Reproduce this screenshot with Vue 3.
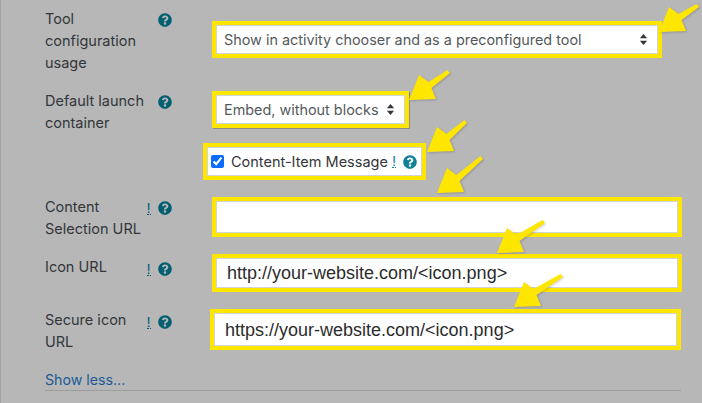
<script setup>
const help = 'M504 256c0 136.997-111.043 248-248 248S8 392.997 8 256C8 119.083 119.043 8 256 8s248 111.083 248 248zM262.655 90c-54.497 0-89.255 22.957-116.549 63.758-3.536 5.286-2.353 12.415 2.715 16.258l34.699 26.31c5.205 3.947 12.621 3.008 16.665-2.122 17.864-22.658 30.113-35.797 57.303-35.797 20.429 0 45.698 13.148 45.698 32.958 0 14.976-12.363 22.667-32.534 33.976C247.128 238.528 216 254.941 216 296v4c0 6.627 5.373 12 12 12h56c6.627 0 12-5.373 12-12v-1.333c0-28.462 83.186-29.647 83.186-106.667 0-58.002-60.165-102-116.531-102zM256 338c-25.365 0-46 20.635-46 46 0 25.364 20.635 46 46 46s46-20.636 46-46c0-25.365-20.635-46-46-46z'
const arrows = [
  [659, 32, 39, -27],
  [409, 100, 40, -29],
  [427, 152, 39, -31],
  [437, 193, 45, -36],
  [497, 253, 47, -32],
  [514, 307, 48, -32],
].map(([x, y, tx, ty]) => {
  const pts = [[0, 0], [10, -25], [19.5, -18], [tx - 1.5, ty - 1], [tx + 1, ty + 2], [22.5, -12], [27, -1]]
  return pts.map(([a, b]) => `${x + a},${y + b}`).join(' ')
})
</script>

<template>
  <div class="page">
    <div class="row row-usage">
      <div class="label">Tool configuration usage</div>
      <div class="icons">
        <svg class="help" viewBox="0 0 512 512"><path :d="help" /></svg>
      </div>
      <div class="field select select-wide">
        <span>Show in activity chooser and as a preconfigured tool</span>
        <svg class="updown" viewBox="0 0 10 12"><path d="M5 0l4 4.6H1zM5 12L1 7.4h8z" /></svg>
      </div>
    </div>

    <div class="row row-launch">
      <div class="label">Default launch container</div>
      <div class="icons">
        <svg class="help" viewBox="0 0 512 512"><path :d="help" /></svg>
      </div>
      <div class="field select select-narrow">
        <span>Embed, without blocks</span>
        <svg class="updown" viewBox="0 0 10 12"><path d="M5 0l4 4.6H1zM5 12L1 7.4h8z" /></svg>
      </div>
    </div>

    <div class="row row-check">
      <div class="field check">
        <input type="checkbox" checked />
        <span>Content-Item Message</span>
        <span class="req req-bright">!</span>
        <svg class="help help-bright" viewBox="0 0 512 512"><path :d="help" /></svg>
      </div>
    </div>

    <div class="row row-selection">
      <div class="label">Content Selection URL</div>
      <div class="icons icons-high">
        <span class="req">!</span>
        <svg class="help" viewBox="0 0 512 512"><path :d="help" /></svg>
      </div>
      <div class="field input input-empty"></div>
    </div>

    <div class="row row-icon">
      <div class="label">Icon URL</div>
      <div class="icons icons-low">
        <span class="req">!</span>
        <svg class="help" viewBox="0 0 512 512"><path :d="help" /></svg>
      </div>
      <div class="field input input-icon">http://your-website.com/&lt;icon.png&gt;</div>
    </div>

    <div class="row row-secure">
      <div class="label">Secure icon URL</div>
      <div class="icons icons-low">
        <span class="req">!</span>
        <svg class="help" viewBox="0 0 512 512"><path :d="help" /></svg>
      </div>
      <div class="field input input-secure">https://your-website.com/&lt;icon.png&gt;</div>
    </div>

    <div class="more"><a class="link">Show less...</a></div>

    <svg class="arrows" viewBox="0 0 702 403" width="702" height="403">
      <polygon v-for="(p, i) in arrows" :key="i" :points="p" />
    </svg>
  </div>
</template>

<style>
html, body { margin: 0; background: #b7b7b7; }
</style>

<style scoped>
.page {
  position: relative;
  width: 702px;
  height: 403px;
  box-sizing: border-box;
  overflow: hidden;
  padding: 8px 21px 0 45px;
  background: #b7b7b7;
  border-left: 1px solid #a3a3a3;
  font-family: Inter, "Liberation Sans", sans-serif;
  font-size: 14.5px;
  line-height: 22px;
  color: #33363a;
}
.row {
  display: grid;
  grid-template-columns: 100px 67px 1fr;
  align-items: start;
  margin-left: -1px;
}
.row-launch { margin-top: 16px; }
.row-check { margin-top: 9px; display: block; }
.row-selection { margin-top: 16px; }
.row-icon { margin-top: 16px; }
.row-secure { margin-top: 17px; }

.label { width: 104px; }
.icons {
  display: flex;
  align-items: center;
  justify-content: flex-end;
  gap: 7px;
  width: 26.5px;
  height: 14px;
  margin-top: 5px;
}
.icons-high { margin-top: 5px; }
.icons-low { margin-top: 6px; }
.help { width: 14px; height: 14px; flex: none; fill: #005f70; }
.help-bright { fill: #0e8199; margin-left: 7px; }
.req {
  font-family: "Liberation Sans", sans-serif;
  font-weight: 400;
  font-size: 15px;
  line-height: 12px;
  height: 12px;
  color: #005f70;
  border-bottom: 1px dotted #005f70;
  flex: none;
  width: 4px;
  text-align: center;
}
.req-bright { color: #0e8199; border-bottom-color: #0e8199; margin-left: 4px; }

.field {
  box-sizing: border-box;
  background: #fff;
  border: 4px solid #ffe600;
  box-shadow: inset 0 0 0 1px #ced4da;
  display: flex;
  align-items: center;
}
.select {
  height: 37px;
  padding: 0 10px 0 8px;
  justify-content: space-between;
  color: #55595c;
  font-size: 14.4px;
  margin-top: 13px;
  white-space: nowrap;
}
.select-wide { width: 450px; }
.select-narrow {
  width: 197px;
  box-shadow: inset 0 0 0 1px #ced4da, 1px 1px 0 #8c8c8c;
  margin-top: 1px;
}
.updown { width: 9px; height: 11px; fill: #33363a; flex: none; }

.check {
  width: 223px;
  height: 37px;
  margin-left: 158px;
  padding-left: 4px;
  white-space: nowrap;
}
.check input {
  width: 13px;
  height: 13px;
  margin: 0 7px 0 0;
  accent-color: #0a6cff;
  flex: none;
}

.input {
  font-family: "Liberation Sans", sans-serif;
  font-size: 18px;
  color: #2c2c2c;
  white-space: nowrap;
}
.input-empty { height: 40px; width: 470px; margin-top: 1px; }
.input-icon { height: 38px; width: 470px; padding-left: 11px; margin-top: -2px; }
.input-secure { height: 41px; width: 471px; padding-left: 11px; margin-left: -2px; }

.more {
  width: 636px;
  height: 21px;
  margin: 16px 0 0 -1px;
  border-bottom: 1px solid #9c9c9c;
  font-size: 14.2px;
}
.link { color: #1a5a96; }

.arrows {
  position: absolute;
  left: -1px;
  top: 0;
  pointer-events: none;
  fill: #ffe600;
  filter: drop-shadow(1px 1px 1px rgba(0, 0, 0, .18));
}
</style>
